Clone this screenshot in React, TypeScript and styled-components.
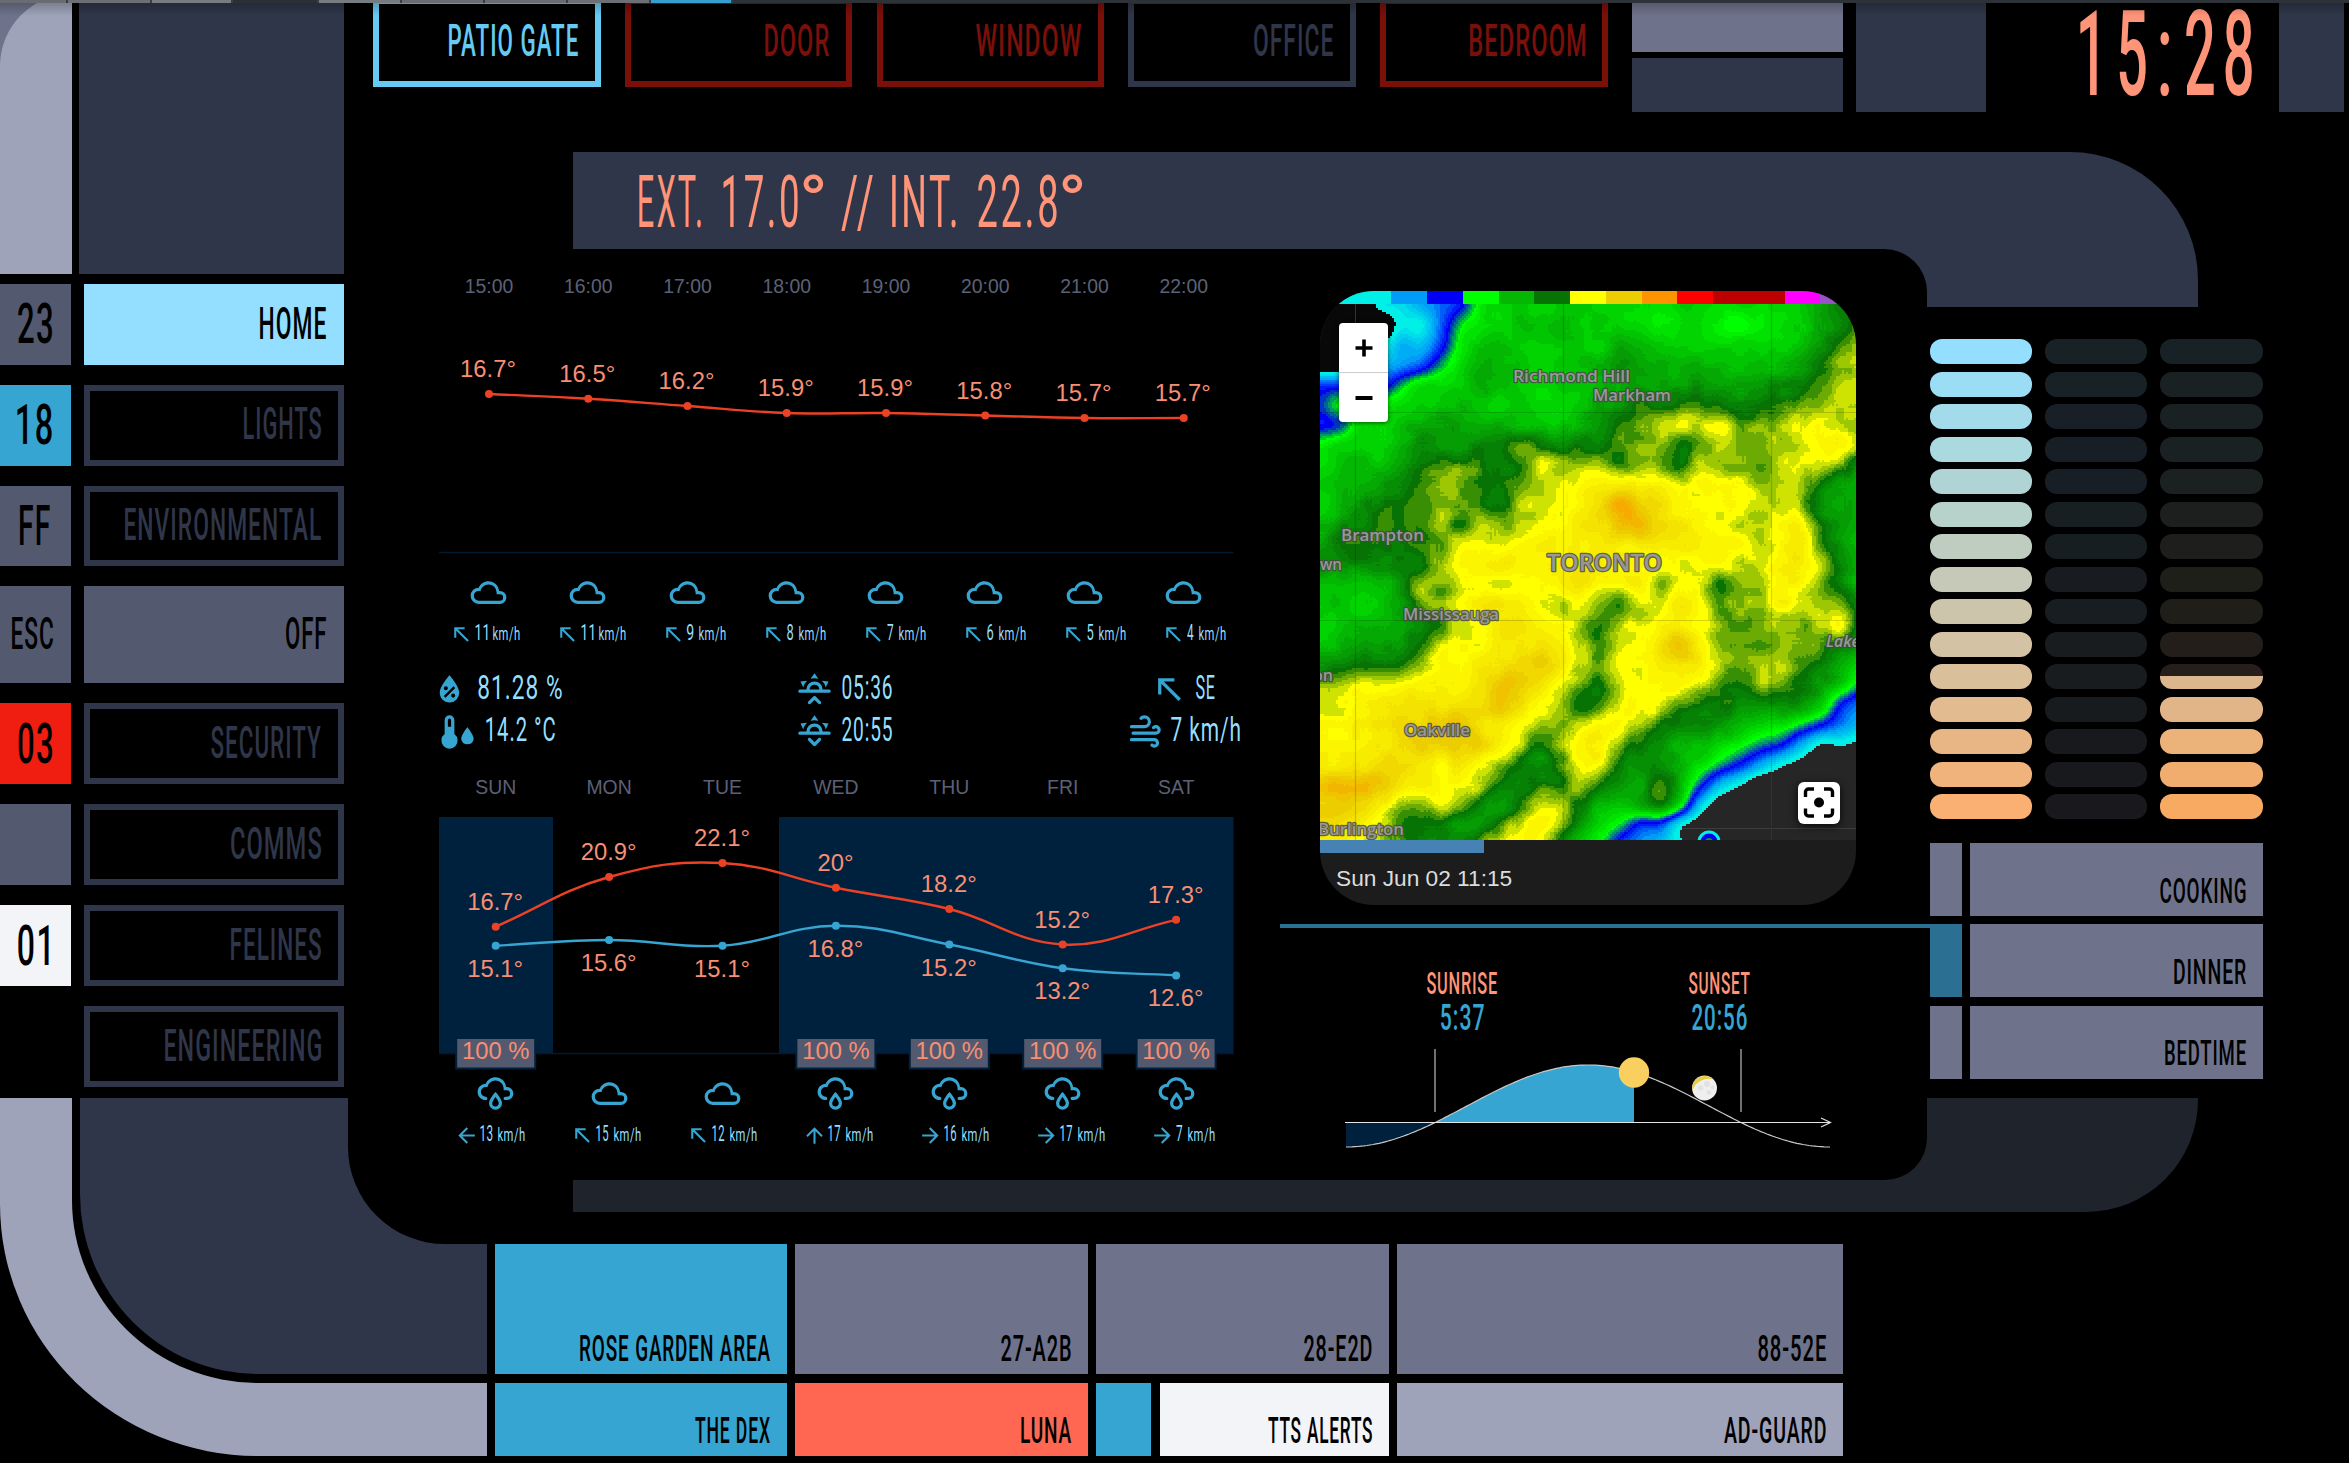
import React, { useMemo } from "react";
import styled, { createGlobalStyle } from "styled-components";

const c = {
  navy: "#2f3649",
  slate: "#6e738b",
  slateDark: "#535a6f",
  mist: "#9ea3ba",
  blue: "#37a5d1",
  sky: "#94dfff",
  white: "#f3f4f8",
  peach: "#ff9478",
  peachSoft: "#f88f73",
  red: "#f01e10",
  coral: "#ff6753",
  ink: "#00213e",
  ash: "#1f232b",
  teal: "#2b7093",
  blood: "#7b0f0a",
  line: "#ec4125",
};

const FONT = `Roboto, "Liberation Sans", sans-serif`;
const SANS = `"Liberation Sans", Arial, sans-serif`;

const Global = createGlobalStyle`
  html, body { margin: 0; padding: 0; background: #000; overflow: hidden; }
  * { box-sizing: border-box; }
`;

/* ---------- condensed lettering ---------- */

const FitBox = styled.span<{ $w: number; $size: number; $color: string; $weight: number; $track: number }>`
  display: block;
  flex: none;
  width: ${(p) => p.$w}px;
  height: ${(p) => p.$size}px;
  line-height: ${(p) => p.$size}px;
  font-family: ${FONT};
  font-size: ${(p) => p.$size}px;
  font-weight: ${(p) => p.$weight};
  color: ${(p) => p.$color};
  letter-spacing: ${(p) => p.$track}em;
`;
const FitInner = styled.span`
  display: block;
  width: max-content;
  white-space: pre;
  transform-origin: 0 0;
`;

let probe: CanvasRenderingContext2D | null = null;
function inkBox(text: string, size: number, weight: number, track: number) {
  if (!probe) probe = document.createElement("canvas").getContext("2d");
  const ctx = probe!;
  ctx.font = `${weight} ${size}px ${FONT}`;
  const m = ctx.measureText(text);
  const gap = track * size * (text.length - 1);
  return { left: m.actualBoundingBoxLeft, width: m.actualBoundingBoxLeft + m.actualBoundingBoxRight + gap };
}

type FitProps = { w: number; cap: number; color?: string; weight?: number; track?: number; children: string };

/** Text squeezed horizontally to a given ink width; `cap` is the capital height. */
function Fit({ w, cap, color = "#000", weight = 500, track = 0.045, children }: FitProps) {
  const size = cap / 0.711;
  const t = useMemo(() => {
    const b = inkBox(children, size, weight, track);
    const k = w / b.width;
    return `translateX(${(b.left * k).toFixed(2)}px) scaleX(${k.toFixed(4)})`;
  }, [children, size, w, weight, track]);
  return (
    <FitBox $w={w} $size={size} $color={color} $weight={weight} $track={track}>
      <FitInner style={{ transform: t }}>{children}</FitInner>
    </FitBox>
  );
}

/* ---------- page frame ---------- */

const Page = styled.div`
  width: 2349px;
  height: 1463px;
  background: #000;
  display: grid;
  grid-template-columns: 348px 147px 1fr;
  grid-template-rows: 3px 1095px 146px 212px 1fr;
  overflow: hidden;
  position: relative;
`;
const Strip = styled.div`
  grid-column: 1 / 4;
  grid-row: 1;
  display: flex;
  background: #2c3238;
`;
const StripTab = styled.div<{ $w: number; $bg: string }>`
  width: ${(p) => p.$w}px;
  background: ${(p) => p.$bg};
  border-right: 2px solid #3a3e42;
`;
const TopShade = styled.div`
  position: absolute;
  top: 3px;
  left: 0;
  right: 0;
  height: 13px;
  background: linear-gradient(rgba(0, 0, 0, 0.22), transparent);
`;

const Sidebar = styled.div`
  grid-column: 1;
  grid-row: 2;
  display: flex;
  flex-direction: column;
  gap: 10px;
`;
const SideHead = styled.div`
  display: flex;
  gap: 7px;
  height: 271px;
`;
const SideCorner = styled.div`
  width: 72px;
  overflow: hidden;
  background: linear-gradient(${c.slate} 60px, ${c.mist} 60px);
`;
const SideCurve = styled.div`
  margin-top: -9px;
  height: 280px;
  background: ${c.mist};
  border-top-left-radius: 72px;
`;
const SideBlock = styled.div`
  width: 265px;
  background: ${c.navy};
`;
const NavList = styled.div`
  display: flex;
  flex-direction: column;
  gap: 20px;
`;
const NavRow = styled.div<{ $h: number }>`
  display: flex;
  gap: 13px;
  height: ${(p) => p.$h}px;
`;
const NavCode = styled.div<{ $bg: string; $r: number }>`
  width: 71px;
  display: flex;
  align-items: center;
  justify-content: flex-end;
  padding-right: ${(p) => p.$r}px;
  background: ${(p) => p.$bg};
`;
const NavButton = styled.div<{ $bg?: string }>`
  width: 260px;
  display: flex;
  align-items: center;
  justify-content: flex-end;
  padding: 0 ${(p) => (p.$bg ? 18 : 17)}px ${(p) => (p.$bg ? 0 : 1)}px 0;
  background: ${(p) => p.$bg ?? "transparent"};
  border: ${(p) => (p.$bg ? "0" : `6px solid ${c.navy}`)};
`;

const ElbowOuter = styled.div`
  grid-column: 1 / 3;
  grid-row: 3 / 5;
  width: 487px;
  background: ${c.mist};
  border-bottom-left-radius: 258px 252px;
  padding: 0 0 73px 72px;
`;
const ElbowGap = styled.div`
  height: 100%;
  background: #000;
  border-bottom-left-radius: 186px 183px;
  padding: 0 0 9px 8px;
`;
const ElbowInner = styled.div`
  height: 100%;
  background: ${c.navy};
  border-bottom-left-radius: 178px 180px;
  padding-left: 268px;
`;
const ElbowCut = styled.div`
  height: 146px;
  background: #000;
  border-bottom-left-radius: 97px;
`;

const Footer = styled.div`
  grid-column: 3;
  grid-row: 4;
  display: grid;
  grid-template-columns: 292px 293px 293px 446px;
  grid-template-rows: 130px 73px;
  gap: 9px 8px;
`;
const FootButton = styled.div<{ $bg: string }>`
  flex: 1;
  background: ${(p) => p.$bg};
  display: flex;
  align-items: flex-end;
  justify-content: flex-end;
  padding: 0 17px 6.5px 0;
`;
const FootSplit = styled.div`
  display: flex;
  gap: 9px;
`;
const FootChip = styled.div`
  width: 55px;
  background: ${c.blue};
`;

/* ---------- main area ---------- */

const Main = styled.div`
  grid-column: 2 / 4;
  grid-row: 2 / 5;
  height: 1209px;
  display: flex;
  flex-direction: column;
  pointer-events: none;
`;
const TopBar = styled.div`
  height: 149px;
  flex: none;
  display: flex;
  align-items: flex-start;
  padding-left: 25px;
`;
const ZoneList = styled.div`
  display: flex;
  gap: 24.3px;
`;
const Zone = styled.div<{ $tone: string }>`
  width: 227.5px;
  height: 84px;
  border: 6px solid ${(p) => p.$tone};
  border-top-width: 1px;
  display: flex;
  align-items: center;
  justify-content: flex-end;
  padding: 0 17px 1px 0;
`;
const Stack = styled.div`
  width: 211px;
  margin-left: 24.5px;
  display: flex;
  flex-direction: column;
  gap: 6px;
`;
const Block = styled.div<{ $h: number; $w?: number; $bg?: string; $ml?: number }>`
  height: ${(p) => p.$h}px;
  width: ${(p) => (p.$w ? `${p.$w}px` : "auto")};
  margin-left: ${(p) => p.$ml ?? 0}px;
  background: ${(p) => p.$bg ?? c.navy};
`;
const Clock = styled.div`
  display: flex;
  margin: -7px 27px 0 94px;
`;
const ClockColon = styled.div`
  padding: 0 17px 0 14px;
`;

const Panel = styled.div`
  display: grid;
  grid-template-columns: 1579px 1fr;
  grid-template-rows: 97px 58px 791px 82px 32px;
`;
const HeadElbow = styled.div`
  grid-column: 1 / 3;
  grid-row: 1 / 3;
  margin-left: 225px;
  width: 1625px;
  background: ${c.navy};
  border-top-right-radius: 128px;
`;
const HeadTitle = styled.div`
  height: 97px;
  display: flex;
  align-items: center;
  padding: 4px 0 0 66px;
`;
const TitlePart = styled.div<{ $gap: number }>`
  margin-right: ${(p) => p.$gap}px;
`;
const HeadCut = styled.div`
  width: 1354px;
  height: 58px;
  background: #000;
  border-top-right-radius: 43px;
`;
const FootElbow = styled.div`
  grid-column: 1 / 3;
  grid-row: 4 / 6;
  margin-left: 225px;
  width: 1625px;
  background: ${c.ash};
  border-bottom-right-radius: 112px;
`;
const FootCut = styled.div`
  width: 1354px;
  height: 82px;
  background: #000;
  border-bottom-right-radius: 42px;
`;
const Content = styled.div`
  grid-column: 1;
  grid-row: 2 / 5;
  padding-left: 91px;
  display: flex;
  gap: 40px;
`;
const WeatherCol = styled.div`
  width: 801px;
  display: flex;
  flex-direction: column;
`;
const Drawing = styled.svg<{ $clip?: boolean }>`
  display: block;
  flex: none;
  overflow: ${(p) => (p.$clip ? "hidden" : "visible")};
`;
const IconRow = styled.div<{ $top: number }>`
  margin-top: ${(p) => p.$top}px;
  height: 39px;
  width: 794px;
  display: flex;
`;
const IconCell = styled.div`
  flex: 1;
  display: flex;
  justify-content: center;
`;
const WindRow = styled.div<{ $gap: number; $left: number; $top: number }>`
  display: flex;
  height: 25px;
  margin-top: ${(p) => p.$top}px;
  padding-left: ${(p) => p.$left}px;
  gap: ${(p) => p.$gap}px;
`;
const Wind = styled.div`
  display: flex;
  align-items: center;
`;
const WindText = styled.div`
  display: flex;
  gap: 5.5px;
  align-items: center;
  padding: 0 0 3px 1px;
`;
const Details = styled.div`
  margin: 23px 0 0 -9px;
  display: flex;
  justify-content: space-between;
  width: 810px;
`;
const DetailCol = styled.div<{ $w: number; $align?: string; $shift?: number }>`
  width: ${(p) => p.$w}px;
  margin-left: ${(p) => p.$shift ?? 0}px;
  display: flex;
  flex-direction: column;
  align-items: ${(p) => p.$align ?? "flex-start"};
  gap: 3px;
`;
const Detail = styled.div<{ $gap: number }>`
  display: flex;
  height: 39px;
  align-items: center;
  gap: ${(p) => p.$gap}px;
`;
const DetailText = styled.div`
  padding-bottom: 3px;
`;

const MapCol = styled.div`
  width: 647px;
`;
const MapCard = styled.div`
  position: relative;
  margin: 42px 0 0 40px;
  width: 536px;
  height: 614px;
  border-radius: 54px;
  overflow: hidden;
  background: #1c1c1c;
`;
const Legend = styled.div`
  display: flex;
  height: 13px;
`;
const LegendCell = styled.div<{ $bg: string }>`
  flex: 1;
  background: ${(p) => p.$bg};
`;
const ZoomBox = styled.div`
  position: absolute;
  left: 19px;
  top: 32px;
  width: 49px;
  height: 99px;
  border-radius: 4px;
  background: #fff;
  box-shadow: 0 1px 5px rgba(0, 0, 0, 0.65);
  display: flex;
  flex-direction: column;
`;
const ZoomKey = styled.div`
  flex: 1;
  display: flex;
  align-items: center;
  justify-content: center;
  & + & {
    border-top: 1px solid #ccc;
  }
`;
const Recenter = styled.div`
  position: absolute;
  left: 478px;
  top: 491px;
  width: 42px;
  height: 42px;
  border-radius: 6px;
  background: #fff;
  box-shadow: 0 2px 8px rgba(0, 0, 0, 0.8);
`;
const Progress = styled.div`
  width: 164px;
  height: 13px;
  background: #4682b4;
`;
const Stamp = styled.div`
  font: 22.7px/26px ${SANS};
  color: #dcdcdc;
  padding: 12px 0 0 16px;
  white-space: nowrap;
`;
const Divider = styled.div`
  margin-top: 19px;
  width: 650px;
  height: 4px;
  background: ${c.teal};
`;
const SunLabels = styled.div`
  display: flex;
  gap: 192px;
  padding: 41px 0 0 147px;
`;
const SunLabel = styled.div`
  display: flex;
  flex-direction: column;
  align-items: center;
  height: 67px;
`;

const Rail = styled.div`
  grid-column: 2;
  grid-row: 3;
  padding: 32px 0 0 3px;
`;
const Gauges = styled.div`
  display: flex;
  gap: 13px;
`;
const Gauge = styled.div`
  width: 102px;
  height: 480px;
  display: flex;
  flex-direction: column;
  justify-content: space-between;
  &:last-child {
    width: 103px;
  }
`;
const Pill = styled.div<{ $bg: string }>`
  height: 25px;
  border-radius: 12px;
  background: ${(p) => p.$bg};
`;
const Actions = styled.div`
  margin-top: 24px;
  display: flex;
  flex-direction: column;
  gap: 8.4px;
`;
const Action = styled.div`
  height: 73px;
  display: flex;
  gap: 8px;
`;
const ActionChip = styled.div<{ $bg: string }>`
  width: 32px;
  background: ${(p) => p.$bg};
`;
const ActionButton = styled.div`
  width: 293px;
  background: ${c.slate};
  display: flex;
  align-items: flex-end;
  justify-content: flex-end;
  padding: 0 17px 6.5px 0;
`;

/* ---------- icons ---------- */

const ICONS = {
  cloudy:
    "M6,19A5,5 0 0,1 1,14A5,5 0 0,1 6,9C7,6.65 9.3,5 12,5C15.43,5 18.24,7.66 18.5,11.03L19,11A4,4 0 0,1 23,15A4,4 0 0,1 19,19H6M19,13H17V12A5,5 0 0,0 12,7C9.5,7 7.45,8.82 7.06,11.19C6.73,11.07 6.37,11 6,11A3,3 0 0,0 3,14A3,3 0 0,0 6,17H19A2,2 0 0,0 21,15A2,2 0 0,0 19,13Z",
  rainy:
    "M6,14.03A1,1 0 0,1 7,15.03C7,15.58 6.55,16.03 6,16.03C3.24,16.03 1,13.79 1,11.03C1,8.27 3.24,6.03 6,6.03C7,3.68 9.3,2.03 12,2.03C15.43,2.03 18.24,4.69 18.5,8.06L19,8.03A4,4 0 0,1 23,12.03C23,14.23 21.21,16.03 19,16.03H18C17.45,16.03 17,15.58 17,15.03C17,14.47 17.45,14.03 18,14.03H19A2,2 0 0,0 21,12.03A2,2 0 0,0 19,10.03H17V9.03C17,6.27 14.76,4.03 12,4.03C9.5,4.03 7.45,5.84 7.06,8.21C6.73,8.09 6.37,8.03 6,8.03A3,3 0 0,0 3,11.03A3,3 0 0,0 6,14.03M12,14.15C12.18,14.39 12.37,14.66 12.56,14.94C13,15.56 14,17.03 14,18C14,19.11 13.1,20 12,20A2,2 0 0,1 10,18C10,17.03 11,15.56 11.44,14.94C11.63,14.66 11.82,14.4 12,14.15M12,11.03L11.5,11.59C11.5,11.59 10.65,12.55 9.79,13.81C8.93,15.06 8,16.56 8,18A4,4 0 0,0 12,22A4,4 0 0,0 16,18C16,16.56 15.07,15.06 14.21,13.81C13.35,12.55 12.5,11.59 12.5,11.59",
  nw: "M19,17.59L17.59,19L7,8.41V15H5V5H15V7H8.41L19,17.59Z",
  w: "M20,11V13H8L13.5,18.5L12.08,19.92L4.16,12L12.08,4.08L13.5,5.5L8,11H20Z",
  e: "M4,11V13H16L10.5,18.5L11.92,19.92L19.84,12L11.92,4.08L10.5,5.5L16,11H4Z",
  n: "M13,20H11V8L5.5,13.5L4.08,12.08L12,4.16L19.92,12.08L18.5,13.5L13,8V20Z",
  humidity:
    "M12,3.25C12,3.25 6,10 6,14C6,17.32 8.69,20 12,20A6,6 0 0,0 18,14C18,10 12,3.25 12,3.25M14.47,9.97L15.53,11.03L9.53,17.03L8.47,15.97M9.75,10A1.25,1.25 0 0,1 11,11.25A1.25,1.25 0 0,1 9.75,12.5A1.25,1.25 0 0,1 8.5,11.25A1.25,1.25 0 0,1 9.75,10M14.25,14.5A1.25,1.25 0 0,1 15.5,15.75A1.25,1.25 0 0,1 14.25,17A1.25,1.25 0 0,1 13,15.75A1.25,1.25 0 0,1 14.25,14.5Z",
  dewpoint:
    "M15,13.6V5A3,3 0 0,0 9,5V13.6A5,5 0 1,0 15,13.6M11,5A1,1 0 0,1 13,5V9H11ZM23,9.4C23,9.4 19.2,14 19.2,16.6A3.9,3.9 0 0,0 26.9,16.6C26.9,14 23,9.4 23,9.4Z",
  rise: "M3,12H7A5,5 0 0,1 12,7A5,5 0 0,1 17,12H21A1,1 0 0,1 22,13A1,1 0 0,1 21,14H3A1,1 0 0,1 2,13A1,1 0 0,1 3,12M15,12A3,3 0 0,0 12,9A3,3 0 0,0 9,12H15M12,2L14.39,5.42C13.65,5.15 12.84,5 12,5C11.16,5 10.35,5.15 9.61,5.42L12,2M3.34,7L7.5,6.65C6.9,7.16 6.36,7.78 5.94,8.5C5.5,9.24 5.25,10 5.11,10.79L3.34,7M20.65,7L18.88,10.79C18.74,10 18.47,9.23 18.05,8.5C17.63,7.78 17.1,7.15 16.5,6.64L20.65,7M12.71,16.3L15.82,19.41C16.21,19.8 16.21,20.43 15.82,20.82C15.43,21.21 14.8,21.21 14.41,20.82L12,18.41L9.59,20.82C9.2,21.21 8.57,21.21 8.18,20.82C7.79,20.43 7.79,19.8 8.18,19.41L11.29,16.3C11.5,16.1 11.74,16 12,16C12.26,16 12.5,16.1 12.71,16.3Z",
  set: "M3,12H7A5,5 0 0,1 12,7A5,5 0 0,1 17,12H21A1,1 0 0,1 22,13A1,1 0 0,1 21,14H3A1,1 0 0,1 2,13A1,1 0 0,1 3,12M15,12A3,3 0 0,0 12,9A3,3 0 0,0 9,12H15M12,2L14.39,5.42C13.65,5.15 12.84,5 12,5C11.16,5 10.35,5.15 9.61,5.42L12,2M3.34,7L7.5,6.65C6.9,7.16 6.36,7.78 5.94,8.5C5.5,9.24 5.25,10 5.11,10.79L3.34,7M20.65,7L18.88,10.79C18.74,10 18.47,9.23 18.05,8.5C17.63,7.78 17.1,7.15 16.5,6.64L20.65,7M12.71,20.71L15.82,17.6C16.21,17.21 16.21,16.57 15.82,16.18C15.43,15.79 14.8,15.79 14.41,16.18L12,18.59L9.59,16.18C9.2,15.79 8.57,15.79 8.18,16.18C7.79,16.57 7.79,17.21 8.18,17.6L11.29,20.71C11.5,20.9 11.74,21 12,21C12.26,21 12.5,20.9 12.71,20.71Z",
  windy:
    "M4,10A1,1 0 0,1 3,9A1,1 0 0,1 4,8H12A2,2 0 0,0 14,6A2,2 0 0,0 12,4C11.45,4 10.95,4.22 10.59,4.59C10.2,5 9.56,5 9.17,4.59C8.78,4.2 8.78,3.56 9.17,3.17C9.9,2.45 10.9,2 12,2A4,4 0 0,1 16,6A4,4 0 0,1 12,10H4M19,12A1,1 0 0,0 20,11A1,1 0 0,0 19,10C18.72,10 18.47,10.11 18.29,10.29C17.9,10.68 17.27,10.68 16.88,10.29C16.5,9.9 16.5,9.27 16.88,8.88C17.42,8.34 18.17,8 19,8A3,3 0 0,1 22,11A3,3 0 0,1 19,14H5A1,1 0 0,1 4,13A1,1 0 0,1 5,12H19M18,18H4A1,1 0 0,1 3,17A1,1 0 0,1 4,16H18A3,3 0 0,1 21,19A3,3 0 0,1 18,22C17.17,22 16.42,21.66 15.88,21.12C15.5,20.73 15.5,20.1 15.88,19.71C16.27,19.32 16.9,19.32 17.29,19.71C17.47,19.89 17.72,20 18,20A1,1 0 0,0 19,19A1,1 0 0,0 18,18Z",
};
type IconName = keyof typeof ICONS;

const Icon = ({ name, size = 39 }: { name: IconName; size?: number }) => (
  <Drawing width={size} height={size} viewBox="0 0 24 24">
    <path d={ICONS[name]} fill={c.blue} fillRule="evenodd" />
  </Drawing>
);

/* ---------- charts ---------- */

function spline(pts: number[][], tension = 0.4) {
  const n = pts.length;
  const cps = pts.map((p, i) => {
    const a = pts[Math.max(0, i - 1)];
    const b = pts[Math.min(n - 1, i + 1)];
    const d1 = Math.hypot(p[0] - a[0], p[1] - a[1]);
    const d2 = Math.hypot(b[0] - p[0], b[1] - p[1]);
    const s = d1 + d2 || 1;
    const fa = (tension * d1) / s;
    const fb = (tension * d2) / s;
    return [p[0] - fa * (b[0] - a[0]), p[1] - fa * (b[1] - a[1]), p[0] + fb * (b[0] - a[0]), p[1] + fb * (b[1] - a[1])];
  });
  let d = `M${pts[0][0]},${pts[0][1]}`;
  for (let i = 1; i < n; i++) d += `C${cps[i - 1][2]},${cps[i - 1][3]} ${cps[i][0]},${cps[i][1]} ${pts[i][0]},${pts[i][1]}`;
  return d;
}

const Axis = styled.text`
  font: 19.4px ${SANS};
  fill: #5c6077;
  text-anchor: middle;
`;
const Temp = styled.text`
  font: 23.8px ${SANS};
  fill: ${c.peachSoft};
  text-anchor: middle;
`;

const HOURS = [
  { t: "15:00", v: "16.7", y: 394, wind: "11" },
  { t: "16:00", v: "16.5", y: 398.8, wind: "11" },
  { t: "17:00", v: "16.2", y: 406, wind: "9" },
  { t: "18:00", v: "15.9", y: 413, wind: "8" },
  { t: "19:00", v: "15.9", y: 413, wind: "7" },
  { t: "20:00", v: "15.8", y: 415.5, wind: "6" },
  { t: "21:00", v: "15.7", y: 418, wind: "5" },
  { t: "22:00", v: "15.7", y: 418, wind: "4" },
];

function Series({ pts, color }: { pts: number[][]; color: string }) {
  return (
    <>
      <path d={spline(pts)} fill="none" stroke={color} strokeWidth={2.4} />
      {pts.map((p) => (
        <circle key={p[0]} cx={p[0]} cy={p[1]} r={4} fill={color} />
      ))}
    </>
  );
}

const HourChart = () => {
  const x = (i: number) => 489 + 99.25 * i;
  return (
    <Drawing width={801} height={304} viewBox="439 249 801 304">
      <path d="M439,552.5H1233.5" stroke="#001a30" strokeWidth={1.5} />
      {HOURS.map((h, i) => (
        <React.Fragment key={h.t}>
          <Axis x={x(i)} y={293}>{h.t}</Axis>
          <Temp x={x(i) - 1} y={h.y - 17}>{h.v}°</Temp>
        </React.Fragment>
      ))}
      <Series color={c.line} pts={HOURS.map((h, i) => [x(i), h.y])} />
    </Drawing>
  );
};

const DAYS: { d: string; hi: string; lo: string; yh: number; yl: number; rain: boolean; dir: IconName; wind: string }[] = [
  { d: "SUN", hi: "16.7", lo: "15.1", yh: 926.7, yl: 945.7, rain: true, dir: "w", wind: "13" },
  { d: "MON", hi: "20.9", lo: "15.6", yh: 877, yl: 940, rain: false, dir: "nw", wind: "15" },
  { d: "TUE", hi: "22.1", lo: "15.1", yh: 863, yl: 945.7, rain: false, dir: "nw", wind: "12" },
  { d: "WED", hi: "20", lo: "16.8", yh: 887.8, yl: 925.7, rain: true, dir: "n", wind: "17" },
  { d: "THU", hi: "18.2", lo: "15.2", yh: 909, yl: 944.5, rain: true, dir: "e", wind: "16" },
  { d: "FRI", hi: "15.2", lo: "13.2", yh: 944.5, yl: 968.3, rain: true, dir: "e", wind: "17" },
  { d: "SAT", hi: "17.3", lo: "12.6", yh: 919.8, yl: 975.4, rain: true, dir: "e", wind: "7" },
];

const DayChart = () => {
  const x = (i: number) => 495.7 + 113.4 * i;
  return (
    <Drawing width={801} height={317} viewBox="439 751 801 317">
      <rect x={439} y={817} width={114} height={236.5} fill={c.ink} />
      <rect x={779} y={817} width={454.5} height={236.5} fill={c.ink} />
      <path d="M439,1053.5H1233.5" stroke="#001a30" strokeWidth={1.5} />
      {DAYS.map((d, i) => (
        <React.Fragment key={d.d}>
          <Axis x={x(i)} y={794}>{d.d}</Axis>
          <Temp x={x(i) - 0.5} y={d.yh - 16.7}>{d.hi}°</Temp>
          <Temp x={x(i) - 0.5} y={d.yl + 31}>{d.lo}°</Temp>
          {d.rain && (
            <>
              <rect x={x(i) - 39.5} y={1038} width={79} height={30.5} fill={c.slateDark} stroke={c.ink} strokeWidth={2} />
              <Temp x={x(i)} y={1059}>100 %</Temp>
            </>
          )}
        </React.Fragment>
      ))}
      <Series color={c.blue} pts={DAYS.map((d, i) => [x(i), d.yl])} />
      <Series color={c.line} pts={DAYS.map((d, i) => [x(i), d.yh])} />
    </Drawing>
  );
};

function WindItem({ dir, value }: { dir: IconName; value: string }) {
  return (
    <Wind>
      <Icon name={dir} size={25} />
      <WindText>
        <Fit w={value.length > 1 ? 12.5 : 6.5} cap={15.5} color={c.sky} weight={400}>{value}</Fit>
        <Fit w={27} cap={13.5} color={c.sky} weight={400}>km/h</Fit>
      </WindText>
    </Wind>
  );
}

/* ---------- radar ---------- */

const RADAR = [
  "0 0 0 10 12 18 23 29 42 46 47 45 48 48 46 46 45 44 47 47 45 45 45 45 47 53 58 60",
  "0 0 0 0 10 10 24 38 45 46 49 48 50 47 48 46 46 42 45 45 42 40 43 45 47 52 58 65",
  "0 0 0 5 17 16 27 42 48 49 47 46 48 48 46 52 50 47 46 46 46 46 46 46 48 54 62 67",
  "0 0 5 15 20 25 36 45 50 50 49 46 48 49 52 55 52 51 50 51 50 49 49 50 53 59 65 67",
  "26 26 20 25 36 44 45 47 52 50 47 45 48 48 50 52 54 53 54 55 54 53 55 56 58 63 67 67",
  "32 40 35 42 45 47 48 50 48 46 48 45 46 48 53 56 60 58 61 62 60 57 58 60 64 66 68 67",
  "29 33 44 45 49 52 54 53 51 51 50 48 48 52 55 61 63 66 68 67 70 64 64 66 68 70 68 66",
  "42 46 47 45 50 57 56 54 58 58 63 59 56 59 59 62 64 64 61 63 66 64 64 66 67 71 72 66",
  "44 48 50 48 53 59 61 63 61 58 61 69 66 66 65 61 64 64 59 68 65 65 62 67 69 67 64 55",
  "47 50 52 54 57 63 65 64 61 59 64 67 68 71 73 73 74 73 69 71 72 70 66 68 67 58 54 50",
  "45 50 55 59 61 62 66 63 62 59 67 68 69 73 78 86 80 76 71 69 70 71 68 67 66 55 53 50",
  "50 55 58 61 60 62 66 60 67 64 66 69 71 74 76 82 84 77 75 72 69 68 66 70 72 61 55 52",
  "54 60 61 60 59 60 64 69 70 68 72 73 73 73 74 74 74 75 74 73 72 72 67 71 74 64 55 50",
  "56 56 56 56 58 59 66 72 72 75 73 72 73 74 74 73 72 70 69 71 70 67 68 72 74 67 56 50",
  "49 49 48 50 55 66 64 68 70 69 71 71 72 75 71 71 73 65 71 68 61 66 67 72 71 65 58 50",
  "48 49 46 48 54 63 64 70 74 75 73 70 68 69 64 62 67 69 74 70 63 66 66 72 68 66 65 56",
  "46 48 50 50 53 58 62 68 71 76 76 73 71 65 62 68 68 72 74 70 65 63 65 66 64 68 70 56",
  "48 51 54 53 56 60 68 70 70 74 75 76 74 67 62 67 70 76 82 73 65 63 63 66 66 62 58 54",
  "56 58 60 60 62 67 71 72 74 76 78 80 75 67 63 69 70 73 76 73 66 63 66 68 62 58 52 45",
  "65 68 70 70 71 72 73 72 76 82 80 76 69 63 61 68 70 71 72 68 60 61 65 64 59 54 47 36",
  "66 69 72 74 76 76 75 76 77 82 76 71 66 60 62 70 71 70 63 60 60 57 56 56 55 48 30 22",
  "70 71 73 75 78 78 81 81 76 73 70 67 65 69 71 71 65 60 58 57 55 49 46 44 38 30 22 16",
  "72 72 73 74 77 80 80 80 78 72 67 59 65 73 73 64 60 57 50 50 46 41 35 30 18 7 8 5",
  "74 74 75 78 77 75 71 75 70 66 59 56 62 70 69 58 56 57 50 44 36 28 18 9 4 0 0 0",
  "82 83 83 81 75 73 71 70 67 59 57 61 60 66 60 55 53 62 50 32 16 8 0 0 0 0 0 0",
  "80 80 79 74 66 64 70 66 58 54 60 69 66 59 50 48 52 58 42 14 2 0 0 0 0 0 0 0",
  "77 76 73 68 61 60 60 54 56 62 69 72 65 54 45 38 28 26 10 2 0 0 0 0 0 0 0 0",
  "72 72 69 66 62 58 56 56 64 70 71 69 58 48 40 26 20 16 8 0 0 0 0 0 0 0 0 0",
].map((r) => r.split(" ").map((n) => Number(n) / 10));

const STOPS = [
  [0, 239, 231],
  [0, 239, 231],
  [0, 156, 247],
  [0, 0, 247],
  [0, 255, 0],
  [3, 183, 3],
  [8, 115, 5],
  [255, 255, 0],
  [236, 206, 0],
  [254, 147, 0],
  [255, 0, 0],
];
const STEPS = 5;

function cubic(a: number, b: number, d: number, e: number, t: number) {
  return b + 0.5 * t * (d - a + t * (2 * a - 5 * b + 4 * d - e + t * (3 * (b - d) + e - a)));
}
function at(i: number, j: number) {
  const r = RADAR[Math.min(27, Math.max(0, j))];
  return r[Math.min(27, Math.max(0, i))];
}
function grain(i: number, j: number) {
  const s = Math.sin(i * 127.1 + j * 311.7) * 43758.5453;
  return s - Math.floor(s) - 0.5;
}
/* blocky small-scale variation, eased between neighbouring bins */
function ripple(x: number, y: number) {
  const gx = x / 11;
  const gy = y / 11;
  const i = Math.floor(gx);
  const j = Math.floor(gy);
  const ease = (t: number) => t * t * (3 - 2 * t);
  const u = ease(gx - i);
  const v = ease(gy - j);
  const a = grain(i, j) * (1 - u) + grain(i + 1, j) * u;
  const b = grain(i, j + 1) * (1 - u) + grain(i + 1, j + 1) * u;
  return a * (1 - v) + b * v;
}
function field(x: number, y: number) {
  const gx = x / 20;
  const gy = y / 20;
  const i = Math.floor(gx);
  const j = Math.floor(gy);
  const row = (k: number) => cubic(at(i - 1, k), at(i, k), at(i + 1, k), at(i + 2, k), gx - i);
  const v = cubic(row(j - 1), row(j), row(j + 1), row(j + 2), gy - j);
  const rough = v < 4 ? 0 : v < 5 ? 0.25 : v < 7 ? 0.42 : 0.3;
  return v + rough * ripple(Math.floor(x / 4) * 4, Math.floor(y / 4) * 4);
}
function shade(level: number) {
  const v = Math.max(1, level / STEPS);
  const k = Math.min(9, Math.floor(v));
  const t = v - k;
  return `rgb(${STOPS[k].map((s, n) => Math.round(s + (STOPS[k + 1][n] - s) * t)).join(",")})`;
}
function radarLayers() {
  const cell = 2;
  const size = 536;
  const layers = new Map<number, string[]>();
  for (let y = 0; y < size; y += cell) {
    let start = 0;
    let cur = -1;
    for (let x = 0; x <= size; x += cell) {
      const v = x < size ? field(x, y) : -1;
      const lv = x === size ? -2 : v < 0.75 ? -1 : Math.round(v * STEPS);
      if (lv !== cur) {
        if (cur >= 0) {
          if (!layers.has(cur)) layers.set(cur, []);
          layers.get(cur)!.push(`M${start},${y}h${x - start}v${cell}h${start - x}z`);
        }
        start = x;
        cur = lv;
      }
    }
  }
  return [...layers.entries()];
}

const Place = styled.text<{ $size?: number; $italic?: boolean }>`
  font: ${(p) => (p.$italic ? "italic " : "")}600 ${(p) => p.$size ?? 17}px "Open Sans", "Noto Sans", sans-serif;
  fill: #989898;
  stroke: #484848;
  stroke-width: 2.6px;
  stroke-opacity: 0.85;
  stroke-linejoin: round;
  paint-order: stroke;
`;

const PLACES: { t: string; x: number; y: number; w: number; size?: number; italic?: boolean }[] = [
  { t: "Richmond Hill", x: 1513, y: 382, w: 117 },
  { t: "Markham", x: 1593, y: 401, w: 78 },
  { t: "Brampton", x: 1341, y: 541, w: 83 },
  { t: "wn", x: 1320, y: 570, w: 22 },
  { t: "TORONTO", x: 1547, y: 571, w: 115, size: 23.5 },
  { t: "Mississauga", x: 1403, y: 620, w: 96 },
  { t: "on", x: 1313, y: 681, w: 20 },
  { t: "Oakville", x: 1404, y: 736, w: 66 },
  { t: "Burlington", x: 1318, y: 835, w: 86 },
  { t: "Lake", x: 1826, y: 647, w: 34, size: 16, italic: true },
];

function Radar() {
  const layers = useMemo(radarLayers, []);
  return (
    <Drawing $clip width={536} height={536} viewBox="0 0 536 536">
      <rect width={536} height={536} fill="#262626" />
      <rect width={200} height={200} fill="#080808" />
      <path d="M35.5,0V536M451.5,0V536M0,524.5H536" stroke="#3d3d3d" strokeWidth={1} />
      <g shapeRendering="crispEdges">
        {layers.map(([lv, d]) => (
          <path key={lv} d={d.join("")} fill={shade(lv)} />
        ))}
      </g>
      <g>
        <circle cx={389} cy={538} r={11.5} fill="#00efe7" />
        <circle cx={389} cy={538} r={8.5} fill="#0000f7" />
        <circle cx={389} cy={538} r={4} fill="#0a9a28" />
      </g>
      <path d="M35.5,0V536M243.5,0V536M451.5,0V536M0,108.5H536M0,316.5H536" stroke="#000" strokeOpacity={0.16} strokeWidth={1.2} />
      <g transform="translate(-1320 -304)">
        {PLACES.map((p) => (
          <Place key={p.t} x={p.x} y={p.y} $size={p.size} $italic={p.italic} textLength={p.w} lengthAdjust="spacingAndGlyphs">
            {p.t}
          </Place>
        ))}
      </g>
    </Drawing>
  );
}

const LEGEND = ["#00efe7", "#00efe7", "#009cf7", "#0000f7", "#00ff00", "#03b703", "#087305", "#ffff00", "#ecce00", "#fe9300", "#ff0000", "#bc0000", "#bc0000", "#ff00ff", "#9854c6"];

/* ---------- sun path ---------- */

function sunCurve(from: number, to: number) {
  const pts: string[] = [];
  const steps = Math.max(2, Math.round((to - from) / 3));
  for (let i = 0; i <= steps; i++) {
    const x = from + ((to - from) * i) / steps;
    pts.push(`${x.toFixed(1)},${(1106 + 41 * Math.cos((Math.PI * (x - 1346)) / 242)).toFixed(1)}`);
  }
  return pts.join("L");
}

const SunPath = () => (
  <Drawing width={647} height={124} viewBox="1280 1036 647 124">
    <path d={`M1346,1122.5L${sunCurve(1346, 1435)}Z`} fill={c.ink} />
    <path d={`M1435,1122.5L${sunCurve(1435, 1634)}V1122.5Z`} fill={c.blue} />
    <path d={`M${sunCurve(1346, 1830)}`} fill="none" stroke="#c8c8c8" strokeWidth={1.2} />
    <path d="M1345,1122.5H1830M1821,1118L1830.5,1122.5L1821,1127" fill="none" stroke="#e4e4e4" strokeWidth={1.2} />
    <path d="M1435,1049V1112M1741,1049V1112" stroke="#8c8c8c" strokeWidth={1.6} />
    <circle cx={1634} cy={1072.5} r={15.2} fill="#f9cf5f" />
    <circle cx={1704.5} cy={1088} r={12.5} fill="#efefef" />
    <path d="M1692.2,1090.5A12.5,12.5 0 0 1 1713,1079.2A18,18 0 0 0 1692.2,1090.5Z" fill="#e8cd3e" />
    <g fill="#e2e2e2">
      <circle cx={1700.5} cy={1088} r={2.8} />
      <circle cx={1707} cy={1084} r={3} />
      <circle cx={1709} cy={1092.5} r={2.4} />
      <circle cx={1712.5} cy={1087.5} r={2} />
    </g>
  </Drawing>
);

/* ---------- data ---------- */

const NAV: { h: number; code?: [string, number, number, string, number]; bg?: string; label: string; w: number }[] = [
  { h: 81, code: ["23", 34, 40, c.slateDark, 19], bg: c.sky, label: "HOME", w: 66 },
  { h: 81, code: ["18", 35, 40, c.blue, 19], label: "LIGHTS", w: 77 },
  { h: 80.4, code: ["FF", 30, 40, c.slateDark, 21], label: "ENVIRONMENTAL", w: 196 },
  { h: 97, code: ["ESC", 41, 31, c.slateDark, 18], bg: c.slateDark, label: "OFF", w: 40 },
  { h: 81, code: ["03", 34, 40, c.red, 19], label: "SECURITY", w: 110 },
  { h: 81, code: ["", 1, 40, c.slateDark, 19], label: "COMMS", w: 90 },
  { h: 81, code: ["01", 31, 40, c.white, 22], label: "FELINES", w: 90 },
  { h: 81, label: "ENGINEERING", w: 156 },
];

const ZONES: [string, number, string][] = [
  ["PATIO GATE", 129, "#66cbf3"],
  ["DOOR", 64, c.blood],
  ["WINDOW", 105, c.blood],
  ["OFFICE", 79, c.navy],
  ["BEDROOM", 115, c.blood],
];

const TABS: [number, string][] = [
  [68, "#696d71"],
  [84, "#6c7074"],
  [81, "#777c80"],
  [86, "#2b3036"],
  [83, "#777c80"],
  [83, "#696d71"],
  [83, "#696d71"],
  [83, "#6c7074"],
  [82, "#379ed0"],
];

/* title words: text, width, gap to the next one */
const TITLE: [string, number, number][] = [
  ["EXT.", 62, 22],
  ["17.0", 75, 5],
  ["°", 21, 17],
  ["//", 32, 19],
  ["INT.", 64, 22],
  ["22.8", 79, 5],
  ["°", 21, 0],
];

const FULL = ["#94deff", "#9bddf4", "#a3dbea", "#aad9e0", "#b0d4d5", "#b7d1cb", "#bfccc0", "#c6c9b7", "#cdc4ac", "#d3c2a4", "#dabf9b", "#e2bb91", "#e8b684", "#f1b37c", "#f9b072"];
const EMPTY = ["#182226", "#182226", "#181f26", "#171e26", "#171e26", "#171f23", "#171e21", "#181c20", "#181d21", "#181c1f", "#181c1e", "#181b1d", "#18191d", "#18191c", "#19191d"];
const PART = ["#182226", "#192123", "#192122", "#1a2122", "#1b2020", "#1c1f1e", "#1e1f1c", "#1f1f1a", "#201e19", "#231e1a", "linear-gradient(#261e1a 48%, #dcb78e 48%)", "#e2b588", "#ebb27a", "#f0ad6e", "#f9aa62"];

export default function App() {
  return (
    <Page>
      <Global />
      <Strip>
        {TABS.map(([w, bg], i) => (
          <StripTab key={i} $w={w} $bg={bg} />
        ))}
      </Strip>

      <Sidebar>
        <SideHead>
          <SideCorner>
            <SideCurve />
          </SideCorner>
          <SideBlock />
        </SideHead>
        <NavList>
          {NAV.map((n) => (
            <NavRow key={n.label} $h={n.h}>
              <NavCode $bg={n.code ? n.code[3] : "transparent"} $r={n.code ? n.code[4] : 0}>
                {n.code && n.code[0] && <Fit w={n.code[1]} cap={n.code[2]}>{n.code[0]}</Fit>}
              </NavCode>
              <NavButton $bg={n.bg}>
                <Fit w={n.w} cap={31} color={n.bg ? "#000" : c.navy}>{n.label}</Fit>
              </NavButton>
            </NavRow>
          ))}
        </NavList>
      </Sidebar>

      <ElbowOuter>
        <ElbowGap>
          <ElbowInner>
            <ElbowCut />
          </ElbowInner>
        </ElbowGap>
      </ElbowOuter>

      <Footer>
        <FootButton $bg={c.blue}><Fit w={190} cap={26}>ROSE GARDEN AREA</Fit></FootButton>
        <FootButton $bg={c.slate}><Fit w={70} cap={26}>27-A2B</Fit></FootButton>
        <FootButton $bg={c.slate}><Fit w={68} cap={26}>28-E2D</Fit></FootButton>
        <FootButton $bg={c.slate}><Fit w={68} cap={26}>88-52E</Fit></FootButton>
        <FootButton $bg={c.blue}><Fit w={75} cap={26}>THE DEX</Fit></FootButton>
        <FootButton $bg={c.coral}><Fit w={50} cap={26}>LUNA</Fit></FootButton>
        <FootSplit>
          <FootChip />
          <FootButton $bg={c.white}><Fit w={104} cap={26}>TTS ALERTS</Fit></FootButton>
        </FootSplit>
        <FootButton $bg={c.mist}><Fit w={102} cap={26}>AD-GUARD</Fit></FootButton>
      </Footer>

      <Main>
        <TopBar>
          <ZoneList>
            {ZONES.map(([t, w, tone]) => (
              <Zone key={t} $tone={tone}>
                <Fit w={w} cap={31} color={tone}>{t}</Fit>
              </Zone>
            ))}
          </ZoneList>
          <Stack>
            <Block $h={49} $bg={c.slate} />
            <Block $h={54} />
          </Stack>
          <Block $h={109} $w={130} $ml={13} />
          <Clock>
            <Fit w={66} cap={84} color={c.peach} weight={500} track={0.16}>15</Fit>
            <ClockColon>
              <Fit w={9} cap={84} color={c.peach} weight={400}>:</Fit>
            </ClockColon>
            <Fit w={66} cap={84} color={c.peach} weight={500} track={0.12}>28</Fit>
          </Clock>
          <Block $h={109} $w={65} />
        </TopBar>

        <Panel>
          <HeadElbow>
            <HeadTitle>
              {TITLE.map(([t, w, gap], i) => (
                <TitlePart key={i} $gap={gap}>
                  <Fit w={w} cap={51} color={c.peach} weight={400} track={0.07}>{t}</Fit>
                </TitlePart>
              ))}
            </HeadTitle>
            <HeadCut />
          </HeadElbow>
          <FootElbow>
            <FootCut />
          </FootElbow>

          <Content>
            <WeatherCol>
              <HourChart />
              <IconRow $top={20}>
                {HOURS.map((h) => (
                  <IconCell key={h.t}><Icon name="cloudy" /></IconCell>
                ))}
              </IconRow>
              <WindRow $top={10} $left={10} $gap={35}>
                {HOURS.map((h) => (
                  <WindItem key={h.t} dir="nw" value={h.wind} />
                ))}
              </WindRow>
              <Details>
                <DetailCol $w={140}>
                  <Detail $gap={8.5}>
                    <Icon name="humidity" />
                    <DetailText><Fit w={84} cap={24} color={c.sky} weight={400}>81.28 %</Fit></DetailText>
                  </Detail>
                  <Detail $gap={16.5}>
                    <Icon name="dewpoint" />
                    <DetailText><Fit w={69} cap={24} color={c.sky} weight={400}>14.2 °C</Fit></DetailText>
                  </Detail>
                </DetailCol>
                <DetailCol $w={140} $shift={-8} $align="center">
                  <Detail $gap={8}>
                    <Icon name="rise" />
                    <DetailText><Fit w={50} cap={24} color={c.sky} weight={400}>05:36</Fit></DetailText>
                  </Detail>
                  <Detail $gap={8}>
                    <Icon name="set" />
                    <DetailText><Fit w={50} cap={24} color={c.sky} weight={400}>20:55</Fit></DetailText>
                  </Detail>
                </DetailCol>
                <DetailCol $w={115} $align="center">
                  <Detail $gap={7}>
                    <Icon name="nw" />
                    <DetailText><Fit w={19} cap={24} color={c.sky} weight={400}>SE</Fit></DetailText>
                  </Detail>
                  <Detail $gap={7}>
                    <Icon name="windy" />
                    <DetailText><Fit w={69} cap={24} color={c.sky} weight={400}>7 km/h</Fit></DetailText>
                  </Detail>
                </DetailCol>
              </Details>
              <DayChart />
              <IconRow $top={6}>
                {DAYS.map((d) => (
                  <IconCell key={d.d}><Icon name={d.rain ? "rainy" : "cloudy"} /></IconCell>
                ))}
              </IconRow>
              <WindRow $top={10} $left={15} $gap={45}>
                {DAYS.map((d) => (
                  <WindItem key={d.d} dir={d.dir} value={d.wind} />
                ))}
              </WindRow>
            </WeatherCol>

            <MapCol>
              <MapCard>
                <Legend>
                  {LEGEND.map((l, i) => (
                    <LegendCell key={i} $bg={l} />
                  ))}
                </Legend>
                <Radar />
                <Progress />
                <Stamp>Sun Jun 02 11:15</Stamp>
                <ZoomBox>
                  <ZoomKey>
                    <svg width="18" height="18" viewBox="0 0 18 18"><path d="M9 .5V17.5M.5 9H17.5" stroke="#000" strokeWidth="3.6" /></svg>
                  </ZoomKey>
                  <ZoomKey>
                    <svg width="18" height="18" viewBox="0 0 18 18"><path d="M.5 9H17.5" stroke="#000" strokeWidth="4" /></svg>
                  </ZoomKey>
                </ZoomBox>
                <Recenter>
                  <svg width="42" height="42" viewBox="0 0 42 42">
                    <path d="M7.5 15V10a3 3 0 0 1 3-3H16M26 7h5.5a3 3 0 0 1 3 3V15M34.5 26.5V31a3 3 0 0 1-3 3H26M16 34H10.5a3 3 0 0 1-3-3V26.5" fill="none" stroke="#000" strokeWidth="3.4" />
                    <circle cx="21" cy="20.5" r="5" fill="#000" />
                  </svg>
                </Recenter>
              </MapCard>
              <Divider />
              <SunLabels>
                <SunLabel>
                  <Fit w={70} cap={22} color={c.peach} weight={500}>SUNRISE</Fit>
                  <Fit w={43} cap={26} color={c.blue}>5:37</Fit>
                </SunLabel>
                <SunLabel>
                  <Fit w={61} cap={22} color={c.peach} weight={500}>SUNSET</Fit>
                  <Fit w={55} cap={26} color={c.blue}>20:56</Fit>
                </SunLabel>
              </SunLabels>
              <SunPath />
            </MapCol>
          </Content>

          <Rail>
            <Gauges>
              {[FULL, EMPTY, PART].map((g, i) => (
                <Gauge key={i}>
                  {g.map((bg, k) => (
                    <Pill key={k} $bg={bg} />
                  ))}
                </Gauge>
              ))}
            </Gauges>
            <Actions>
              <Action>
                <ActionChip $bg={c.slate} />
                <ActionButton><Fit w={86} cap={25.5}>COOKING</Fit></ActionButton>
              </Action>
              <Action>
                <ActionChip $bg={c.teal} />
                <ActionButton><Fit w={72} cap={25.5}>DINNER</Fit></ActionButton>
              </Action>
              <Action>
                <ActionChip $bg={c.slate} />
                <ActionButton><Fit w={81} cap={25.5}>BEDTIME</Fit></ActionButton>
              </Action>
            </Actions>
          </Rail>
        </Panel>
      </Main>
      <TopShade />
    </Page>
  );
}
